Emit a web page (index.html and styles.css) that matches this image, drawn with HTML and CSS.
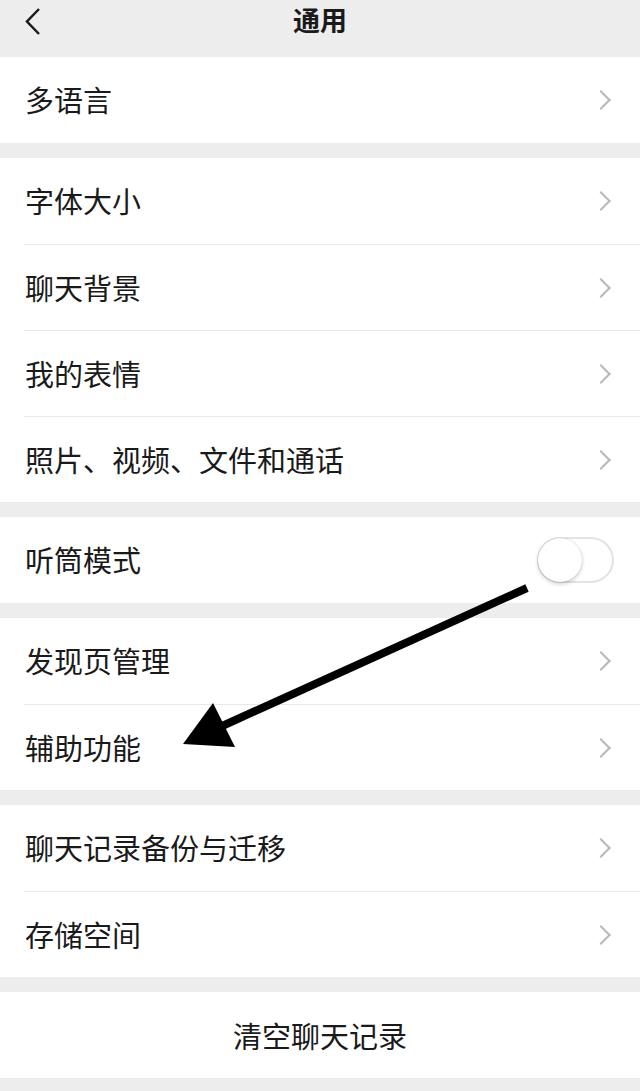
FILE: index.html
```html
<!DOCTYPE html>
<html lang="zh-CN">
<head>
  <meta charset="UTF-8" />
  <meta name="viewport" content="width=device-width, initial-scale=1.0"/>
  <title>通用</title>
  <link rel="stylesheet" href="styles.css">
</head>
<body>
  <div class="nav">
    <svg class="back" width="20" height="30" viewBox="0 0 20 30">
      <polyline points="15,2 3,14.5 15,27" />
    </svg>
    <h1>通用</h1>
  </div>

  <div class="group">
    <div class="row"><div class="row-body"><span>多语言</span><i class="chev"></i></div></div>
  </div>

  <div class="group">
    <div class="row"><div class="row-body"><span>字体大小</span><i class="chev"></i></div></div>
    <div class="row"><div class="row-body"><span>聊天背景</span><i class="chev"></i></div></div>
    <div class="row"><div class="row-body"><span>我的表情</span><i class="chev"></i></div></div>
    <div class="row"><div class="row-body"><span>照片、视频、文件和通话</span><i class="chev"></i></div></div>
  </div>

  <div class="group">
    <div class="row"><div class="row-body"><span>听筒模式</span><div class="switch"><div class="knob"></div></div></div></div>
  </div>

  <div class="group">
    <div class="row"><div class="row-body"><span>发现页管理</span><i class="chev"></i></div></div>
    <div class="row"><div class="row-body"><span>辅助功能</span><i class="chev"></i></div></div>
  </div>

  <div class="group">
    <div class="row"><div class="row-body"><span>聊天记录备份与迁移</span><i class="chev"></i></div></div>
    <div class="row"><div class="row-body"><span>存储空间</span><i class="chev"></i></div></div>
  </div>

  <div class="group">
    <div class="action">清空聊天记录</div>
  </div>

  <!-- pointer drawn over the list -->
  <svg class="pointer" width="640" height="1091" viewBox="0 0 640 1091">
    <line x1="527" y1="588" x2="220" y2="727" />
    <polygon points="183,744 213,703 235,747" />
  </svg>
</body>
</html>
```

FILE: styles.css
```css
* {
  box-sizing: border-box;
}

body {
  margin: 0;
  background: #ededed;
  font-family: "Noto Sans CJK SC", sans-serif;
  color: #1a1a1a;
  position: relative;
  min-height: 1091px;
}

.nav {
  height: 57px;
  display: flex;
  align-items: flex-start;
  justify-content: center;
  position: relative;
}

.nav h1 {
  margin: 0;
  font-size: 27px;
  font-weight: bold;
  line-height: 40px;
}

.back {
  position: absolute;
  left: 24px;
  top: 7px;
}

.back polyline {
  fill: none;
  stroke: #1a1a1a;
  stroke-width: 2.5;
}

.group {
  background: #fff;
  margin-bottom: 15px;
}

.row {
  padding-left: 24px;
}

.row-body {
  height: 86px;
  display: flex;
  align-items: center;
  justify-content: space-between;
  padding-left: 1px;
  padding-right: 30px;
  font-size: 29px;
  line-height: 40px;
}

.row-body span {
  margin-top: -2px;
}

.row + .row .row-body {
  border-top: 1px solid #e8e8e8;
}

.chev {
  width: 14px;
  height: 14px;
  border-top: 2px solid #b8b8b8;
  border-right: 2px solid #b8b8b8;
  transform: rotate(45deg);
  margin-right: 2px;
}

.switch {
  width: 77px;
  height: 46px;
  border-radius: 23px;
  border: 2px solid #e3e3e3;
  margin-right: -4px;
  position: relative;
}

.knob {
  position: absolute;
  left: -1px;
  top: -1px;
  width: 44px;
  height: 44px;
  border-radius: 50%;
  background: #fff;
  box-shadow: 0 2px 4px rgba(0, 0, 0, 0.2), 0 0 1px rgba(0, 0, 0, 0.25);
}

.action {
  height: 86px;
  display: flex;
  align-items: center;
  justify-content: center;
  font-size: 29px;
}

.pointer {
  position: absolute;
  left: 0;
  top: 0;
  pointer-events: none;
}

.pointer line {
  stroke: #000;
  stroke-width: 8;
}

.pointer polygon {
  fill: #000;
}
```
